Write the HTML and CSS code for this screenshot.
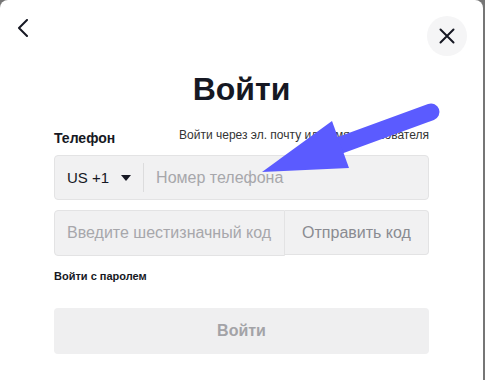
FILE: index.html
```html
<!DOCTYPE html>
<html lang="ru">
<head>
    <meta charset="UTF-8">
    <meta name="viewport" content="width=device-width, initial-scale=1.0">
    <title>Войти</title>
    <link rel="stylesheet" href="styles.css">
</head>
<body>
    <div class="modal">
        <div class="modal-header">
            <button class="back-btn" aria-label="Назад">
                <svg width="12" height="18" viewBox="0 0 12 18">
                    <path d="M10 1 L2 9 L10 17" fill="none" stroke="#161823" stroke-width="2" stroke-linecap="round" stroke-linejoin="round"/>
                </svg>
            </button>
            <button class="close-btn" aria-label="Закрыть">
                <svg width="16" height="16" viewBox="0 0 16 16">
                    <path d="M1.5 1.5 L14.5 14.5 M14.5 1.5 L1.5 14.5" fill="none" stroke="#161823" stroke-width="2" stroke-linecap="round"/>
                </svg>
            </button>
        </div>

        <h1 class="title">Войти</h1>

        <div class="form">
            <div class="label-row">
                <span class="label">Телефон</span>
                <a class="link" href="#">Войти через эл. почту или имя пользователя</a>
            </div>

            <div class="phone-field">
                <div class="country">
                    <span>US +1</span>
                    <span class="caret"></span>
                </div>
                <span class="divider"></span>
                <input type="text" class="phone-input" placeholder="Номер телефона">
            </div>

            <div class="code-row">
                <input type="text" class="code-input" placeholder="Введите шестизначный код">
                <button class="send-btn">Отправить код</button>
            </div>

            <a class="password-link" href="#">Войти с паролем</a>

            <button class="submit-btn" disabled>Войти</button>
        </div>

        <!-- annotation arrow -->
        <svg class="arrow" width="485" height="380" viewBox="0 0 485 380">
            <line x1="431" y1="112" x2="338" y2="146" stroke="#5b5bff" stroke-width="17" stroke-linecap="round"/>
            <polygon points="332,121 349,168 262,172" fill="#5b5bff"/>
        </svg>
    </div>
</body>
</html>
```

FILE: styles.css
```css
body {
    margin: 0;
    background-color: #767676;
    font-family: "Liberation Sans", Arial, sans-serif;
    color: #161823;
    overflow: hidden;
}
.modal {
    position: relative;
    width: 483px;
    height: 380px;
    background-color: #fff;
    border-radius: 8px 8px 0 0;
}
.modal-header {
    display: flex;
    justify-content: space-between;
    align-items: flex-start;
    padding: 16px 16px 0 17px;
}
.back-btn {
    background: none;
    border: none;
    padding: 0;
    margin-top: 3px;
    width: 12px;
    height: 18px;
    cursor: pointer;
}
.back-btn svg,
.close-btn svg {
    display: block;
}
.close-btn {
    width: 40px;
    height: 40px;
    border: none;
    border-radius: 50%;
    background-color: #f5f5f6;
    display: flex;
    align-items: center;
    justify-content: center;
    padding: 0;
    cursor: pointer;
}
.title {
    margin: 13px 0 0;
    font-size: 32px;
    line-height: 40px;
    font-weight: bold;
    text-align: center;
}
.form {
    padding: 0 54px;
    display: flex;
    flex-direction: column;
}
.label-row {
    display: flex;
    justify-content: space-between;
    align-items: flex-start;
    margin-top: 19px;
}
.label {
    font-size: 14px;
    line-height: 20px;
    font-weight: bold;
}
.link {
    font-size: 12px;
    line-height: 14px;
    color: #333;
    text-decoration: none;
}
.phone-field {
    margin-top: 7px;
    height: 45px;
    box-sizing: border-box;
    display: flex;
    align-items: center;
    background-color: #f1f1f2;
    border: 1px solid #e3e3e4;
    border-radius: 4px;
}
.country {
    display: flex;
    align-items: center;
    padding-left: 12px;
    font-size: 15px;
}
.caret {
    width: 0;
    height: 0;
    margin-left: 12px;
    border-left: 5px solid transparent;
    border-right: 5px solid transparent;
    border-top: 6px solid #161823;
}
.divider {
    width: 1px;
    height: 29px;
    margin-left: 12px;
    background-color: #dcdcdd;
}
input {
    font-family: inherit;
    font-size: 16px;
    color: #161823;
    background: transparent;
    border: none;
    outline: none;
}
input::placeholder {
    color: #a7a7ab;
}
.phone-input {
    flex: 1;
    padding: 0 0 0 12px;
    height: 100%;
}
.code-row {
    margin-top: 10px;
    display: flex;
    height: 46px;
}
.code-input {
    width: 231px;
    box-sizing: border-box;
    padding: 0 12px;
    background-color: #f1f1f2;
    border: 1px solid #e3e3e4;
    border-radius: 4px 0 0 4px;
}
.send-btn {
    flex: 1;
    height: 45px;
    font-family: inherit;
    font-size: 16px;
    color: #8a8b91;
    background-color: #f1f1f2;
    border: 1px solid #e3e3e4;
    border-left: none;
    border-radius: 0 4px 4px 0;
    cursor: pointer;
}
.password-link {
    margin-top: 13px;
    font-size: 11px;
    line-height: 14px;
    font-weight: bold;
    color: #161823;
    text-decoration: none;
    align-self: flex-start;
}
.submit-btn {
    margin-top: 25px;
    height: 46px;
    border: none;
    border-radius: 4px;
    background-color: #efeff0;
    color: #a3a3a7;
    font-family: inherit;
    font-size: 16px;
    font-weight: bold;
}
.arrow {
    position: absolute;
    top: 0;
    left: 0;
    pointer-events: none;
}
```
